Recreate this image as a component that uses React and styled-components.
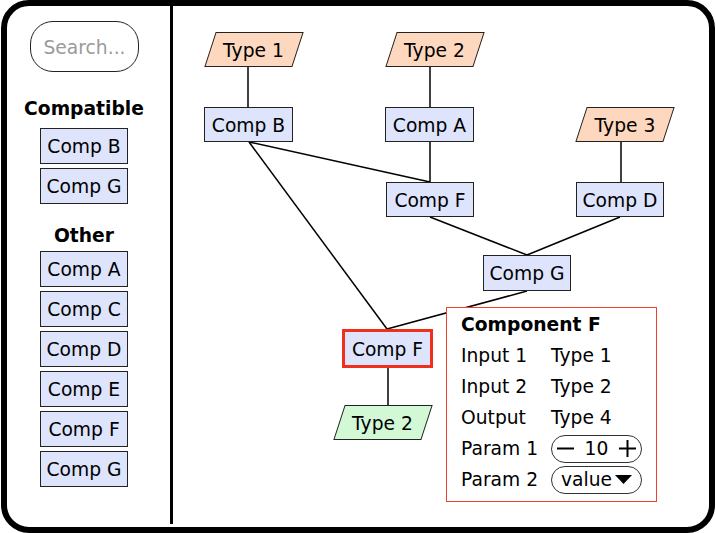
import React from 'react';
import styled, { createGlobalStyle } from 'styled-components';

const GlobalStyle = createGlobalStyle`
  html, body {
    margin: 0;
    padding: 0;
    background: #ffffff;
  }
  body {
    font-family: "DejaVu Sans", "Liberation Sans", sans-serif;
    font-size: 18.7px;
    color: #000;
  }
`;

// page coordinates of the canvas origin (after frame border + divider)
const OX = 173;
const OY = 6;

const Frame = styled.div`
  box-sizing: border-box;
  margin-left: 1px;
  width: 714px;
  height: 533px;
  border: 6px solid #000;
  border-radius: 28px;
  display: flex;
  overflow: hidden;
  background: #fff;
`;

const Sidebar = styled.div`
  box-sizing: border-box;
  width: 166px;
  flex-shrink: 0;
  margin-bottom: 3px;
  padding: 15px 9px 0 0;
  border-right: 3px solid #000;
  display: flex;
  flex-direction: column;
  align-items: center;
`;

const Search = styled.input`
  box-sizing: border-box;
  width: 109px;
  height: 51px;
  border: 1.5px solid #222;
  border-radius: 23px;
  padding: 2px 0 0 13px;
  font-family: "DejaVu Sans", sans-serif;
  font-size: 18.7px;
  outline: none;
  background: #fff;
  &::placeholder {
    color: #9a9a9a;
  }
`;

const Heading = styled.div`
  font-weight: bold;
  line-height: 21px;
  margin-top: ${p => p.$top}px;
  margin-bottom: ${p => p.$bottom}px;
`;

const List = styled.div`
  display: flex;
  flex-direction: column;
  gap: 4px;
`;

const Item = styled.div`
  box-sizing: border-box;
  width: 88px;
  height: 36px;
  padding-top: 1px;
  background: #dde4fb;
  border: 1.5px solid #222;
  display: flex;
  align-items: center;
  justify-content: center;
`;

const Canvas = styled.div`
  position: relative;
  flex: 1;
`;

const Wires = styled.svg`
  position: absolute;
  left: 0;
  top: 0;
`;

const Box = styled.div`
  position: absolute;
  left: ${p => p.$x - OX}px;
  top: ${p => p.$y - OY}px;
  width: ${p => p.$w}px;
  height: ${p => p.$h}px;
  box-sizing: border-box;
  padding-top: 1px;
  background: #dde4fb;
  border: ${p => (p.$selected ? '3px solid #f0301c' : '1.5px solid #222')};
  display: flex;
  align-items: center;
  justify-content: center;
`;

const Para = styled.div`
  position: absolute;
  left: ${p => p.$cx - 44 - OX}px;
  top: ${p => p.$y - OY}px;
  width: 88px;
  height: 35px;
  padding-top: 1px;
  box-sizing: border-box;
  display: flex;
  align-items: center;
  justify-content: center;

  &::before {
    content: '';
    position: absolute;
    inset: 0;
    box-sizing: border-box;
    background: ${p => (p.$out ? '#d3f8d6' : '#fdd8bf')};
    border: 1.5px solid #222;
    transform: skewX(-18deg);
  }

  span {
    position: relative;
  }
`;

const Panel = styled.div`
  position: absolute;
  left: ${446 - OX}px;
  top: ${307 - OY}px;
  width: 211px;
  height: 195px;
  box-sizing: border-box;
  border: 1.5px solid #f2402c;
  background: #fff;
  padding: 1px 0 0 14px;
  display: grid;
  grid-template-columns: 90px auto;
  grid-auto-rows: 31px;
  align-items: center;
`;

const PanelTitle = styled.div`
  grid-column: 1 / 3;
  font-weight: bold;
`;

const Pill = styled.div`
  box-sizing: border-box;
  width: 91px;
  height: 28px;
  border: 1.2px solid #333;
  border-radius: 14px;
  display: flex;
  align-items: center;
  justify-content: ${p => (p.$spread ? 'space-between' : 'center')};
  padding: 0 ${p => (p.$spread ? 5 : 0)}px;
  gap: 3px;
`;

const Minus = () => (
  <svg width="17" height="17" viewBox="0 0 17 17">
    <path d="M0 8.5 H17" stroke="#000" strokeWidth="2" />
  </svg>
);

const Plus = () => (
  <svg width="17" height="17" viewBox="0 0 17 17">
    <path d="M0 8.5 H17 M8.5 0 V17" stroke="#000" strokeWidth="2" />
  </svg>
);

const nodes = [
  { label: 'Comp B', x: 204, y: 107, w: 89, h: 35 },
  { label: 'Comp A', x: 385, y: 107, w: 89, h: 35 },
  { label: 'Comp F', x: 386, y: 182, w: 88, h: 35 },
  { label: 'Comp D', x: 576, y: 182, w: 88, h: 35 },
  { label: 'Comp G', x: 483, y: 255, w: 88, h: 36 },
  { label: 'Comp F', x: 342, y: 329, w: 91, h: 39, selected: true },
];

const types = [
  { label: 'Type 1', cx: 253.5, y: 32 },
  { label: 'Type 2', cx: 434.5, y: 32 },
  { label: 'Type 3', cx: 625, y: 107 },
  { label: 'Type 2', cx: 382.5, y: 405, out: true },
];

const links = [
  [248, 67, 248, 107],
  [430, 67, 430, 107],
  [249, 142, 430, 182],
  [430, 142, 430, 182],
  [621, 142, 621, 182],
  [249, 142, 387, 329],
  [430, 217, 527, 255],
  [620, 217, 527, 255],
  [527, 291, 387, 329],
  [388, 368, 388, 405],
];

export default function App() {
  return (
    <>
      <GlobalStyle />
      <Frame>
        <Sidebar>
          <Search placeholder="Search..." />
          <Heading $top={26} $bottom={9}>Compatible</Heading>
          <List>
            <Item>Comp B</Item>
            <Item>Comp G</Item>
          </List>
          <Heading $top={21} $bottom={5}>Other</Heading>
          <List>
            {['A', 'C', 'D', 'E', 'F', 'G'].map(l => (
              <Item key={l}>Comp {l}</Item>
            ))}
          </List>
        </Sidebar>
        <Canvas>
          <Wires width="535" height="521" viewBox={`${OX} ${OY} 535 521`}>
            {links.map(([x1, y1, x2, y2], i) => (
              <line key={i} x1={x1} y1={y1} x2={x2} y2={y2} stroke="#000" strokeWidth="1.5" />
            ))}
          </Wires>
          {types.map((t, i) => (
            <Para key={i} $cx={t.cx} $y={t.y} $out={t.out}>
              <span>{t.label}</span>
            </Para>
          ))}
          {nodes.map((n, i) => (
            <Box key={i} $x={n.x} $y={n.y} $w={n.w} $h={n.h} $selected={n.selected}>
              {n.label}
            </Box>
          ))}
          <Panel>
            <PanelTitle>Component F</PanelTitle>
            <div>Input 1</div>
            <div>Type 1</div>
            <div>Input 2</div>
            <div>Type 2</div>
            <div>Output</div>
            <div>Type 4</div>
            <div>Param 1</div>
            <Pill $spread>
              <Minus />
              <span>10</span>
              <Plus />
            </Pill>
            <div>Param 2</div>
            <Pill>
              <span>value</span>
              <svg width="17" height="9" viewBox="0 0 17 9">
                <path d="M0 0 H17 L8.5 9 Z" fill="#000" />
              </svg>
            </Pill>
          </Panel>
        </Canvas>
      </Frame>
    </>
  );
}
